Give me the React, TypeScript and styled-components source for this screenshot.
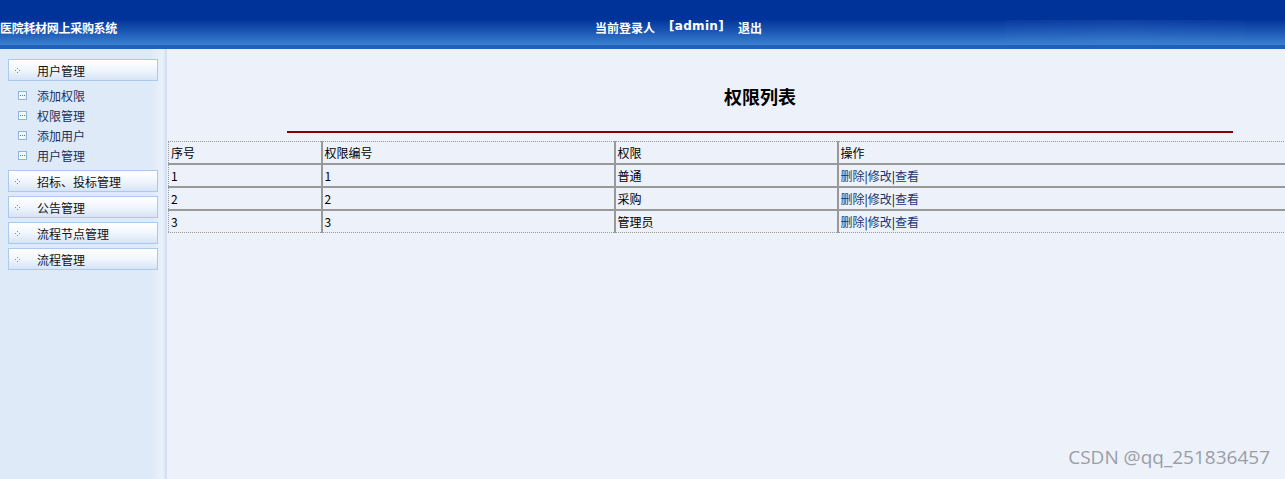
import React from "react";
import styled, { createGlobalStyle } from "styled-components";

const GlobalStyle = createGlobalStyle`
  html, body {
    margin: 0;
    padding: 0;
    background: #edf1fa;
    font-family: "Noto Sans CJK SC", "DejaVu Sans", sans-serif;
    font-size: 12px;
    overflow: hidden;
  }
`;

const Page = styled.div`
  width: 1285px;
  height: 479px;
  display: flex;
  flex-direction: column;
  position: relative;
  overflow: hidden;
`;

const Header = styled.div`
  height: 49px;
  flex-shrink: 0;
  border-bottom: 4px solid #2160b8;
  background: linear-gradient(
    to bottom,
    #003399 0px,
    #003399 19px,
    #1d58b4 32px,
    #3b81d1 45px
  );
  display: flex;
  align-items: center;
  color: #ffffff;
  font-weight: bold;
  font-size: 12px;
  padding-top: 9px;
  box-sizing: border-box;
  position: relative;
  overflow: hidden;
`;

const SiteTitle = styled.div`
  width: 595px;
  letter-spacing: -0.3px;
`;

const UserBar = styled.div`
  display: flex;
  gap: 14px;
  font-size: 12px;
`;

const Admin = styled.span`
  font-family: "DejaVu Sans", sans-serif;
  letter-spacing: 0.3px;
`;

const HeaderGlow = styled.div`
  position: absolute;
  right: 40px;
  top: 20px;
  width: 240px;
  height: 22px;
  background: linear-gradient(
    to right,
    rgba(80, 140, 220, 0.05),
    rgba(90, 150, 230, 0.1),
    rgba(80, 140, 220, 0.03)
  );
`;

const Body = styled.div`
  flex: 1;
  display: flex;
  min-height: 0;
`;

const Sidebar = styled.div`
  width: 167px;
  flex-shrink: 0;
  background: linear-gradient(
    to right,
    #deeaf8 0px,
    #deeaf8 150px,
    #e9f1fb 162px,
    #dfe9f7 165px
  );
  border-right: 2px solid #d3e0f2;
  padding-top: 10px;
  box-sizing: border-box;
`;

const GroupHeader = styled.div`
  margin: 0 0 4px 8px;
  width: 150px;
  height: 22px;
  box-sizing: border-box;
  border: 1px solid #a9c9ee;
  background: linear-gradient(to bottom, #ffffff 0%, #f1f6fd 50%, #d6e4f6 100%);
  display: flex;
  align-items: center;
  color: #111;
`;

const DotIcon = styled.svg`
  width: 5px;
  height: 5px;
  margin: 0 17px 0 6px;
`;

const SubList = styled.div`
  margin: 0 0 5px 0;
`;

const SubItem = styled.div`
  height: 20px;
  display: flex;
  align-items: center;
  color: #1b2f5e;
`;

const BoxIcon = styled.svg`
  width: 9px;
  height: 9px;
  margin: 0 10px 0 18px;
`;

const Main = styled.div`
  flex: 1;
  min-width: 0;
  overflow: hidden;
  display: flex;
  flex-direction: column;
  padding-top: 35px;
`;

const Title = styled.div`
  margin: 0 52px 0 120px;
  text-align: center;
  font-size: 18px;
  font-weight: bold;
  color: #000;
  height: 24px;
  line-height: 24px;
`;

const RedLine = styled.div`
  margin: 23px 52px 0 120px;
  height: 2px;
  background: #8b0000;
`;

const Table = styled.table`
  margin-top: 8px;
  margin-left: 1px;
  width: 1130px;
  flex-shrink: 0;
  border-collapse: collapse;
  border: 1px dotted #999;
  table-layout: fixed;
  color: #000;
  font-size: 12px;
`;

const Row = styled.tr<{ last?: boolean }>`
  height: 21px;
  border-bottom: ${(p) => (p.last ? "1px dotted #999" : "2px solid #999")};
`;

const Cell = styled.td<{ first?: boolean }>`
  padding: 0 0 0 2px;
  border-left: ${(p) => (p.first ? "none" : "2px solid #999")};
  text-align: left;
  vertical-align: middle;
  white-space: nowrap;
  line-height: 21px;
`;

const Link = styled.a`
  color: #1a3570;
  text-decoration: none;
`;

const Watermark = styled.div`
  position: absolute;
  right: 15px;
  bottom: 9px;
  font-family: "Open Sans", "Noto Sans", sans-serif;
  font-size: 19px;
  color: #9a9ea6;
`;

const DotMark = () => (
  <DotIcon viewBox="0 0 5 5">
    <rect x="2" y="0" width="1" height="1" fill="#5b8ed6" />
    <rect x="0" y="2" width="1" height="1" fill="#5b8ed6" />
    <rect x="4" y="2" width="1" height="1" fill="#5b8ed6" />
    <rect x="2" y="4" width="1" height="1" fill="#5b8ed6" />
  </DotIcon>
);

const BoxMark = () => (
  <BoxIcon viewBox="0 0 9 9">
    <rect x="0.5" y="0.5" width="8" height="8" fill="#f4f8fe" stroke="#8fb4e4" />
    <rect x="2" y="4" width="1" height="1" fill="#4a7cc4" />
    <rect x="4" y="4" width="1" height="1" fill="#4a7cc4" />
    <rect x="6" y="4" width="1" height="1" fill="#4a7cc4" />
  </BoxIcon>
);

const groups = [
  { name: "用户管理", items: ["添加权限", "权限管理", "添加用户", "用户管理"] },
  { name: "招标、投标管理", items: [] },
  { name: "公告管理", items: [] },
  { name: "流程节点管理", items: [] },
  { name: "流程管理", items: [] },
];

const rows = [
  { id: "1", code: "1", name: "普通" },
  { id: "2", code: "2", name: "采购" },
  { id: "3", code: "3", name: "管理员" },
];

export default function App() {
  return (
    <Page>
      <GlobalStyle />
      <Header>
        <HeaderGlow />
        <SiteTitle>医院耗材网上采购系统</SiteTitle>
        <UserBar>
          <span>当前登录人</span>
          <Admin>[admin]</Admin>
          <span>退出</span>
        </UserBar>
      </Header>
      <Body>
        <Sidebar>
          {groups.map((g) => (
            <React.Fragment key={g.name}>
              <GroupHeader>
                <DotMark />
                {g.name}
              </GroupHeader>
              {g.items.length > 0 && (
                <SubList>
                  {g.items.map((it) => (
                    <SubItem key={it}>
                      <BoxMark />
                      {it}
                    </SubItem>
                  ))}
                </SubList>
              )}
            </React.Fragment>
          ))}
        </Sidebar>
        <Main>
          <Title>权限列表</Title>
          <RedLine />
          <Table>
            <colgroup>
              <col style={{ width: 153 }} />
              <col style={{ width: 293 }} />
              <col style={{ width: 223 }} />
              <col />
            </colgroup>
            <tbody>
              <Row>
                <Cell first>序号</Cell>
                <Cell>权限编号</Cell>
                <Cell>权限</Cell>
                <Cell>操作</Cell>
              </Row>
              {rows.map((r, i) => (
                <Row key={r.id} last={i === rows.length - 1}>
                  <Cell first>{r.id}</Cell>
                  <Cell>{r.code}</Cell>
                  <Cell>{r.name}</Cell>
                  <Cell>
                    <Link href="#">删除</Link>|<Link href="#">修改</Link>|
                    <Link href="#">查看</Link>
                  </Cell>
                </Row>
              ))}
            </tbody>
          </Table>
        </Main>
      </Body>
      <Watermark>CSDN @qq_251836457</Watermark>
    </Page>
  );
}
